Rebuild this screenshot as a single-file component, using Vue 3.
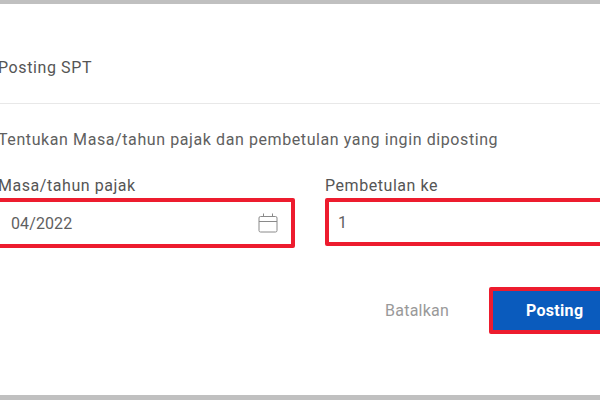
<script setup>
const fields = [
  { label: 'Masa/tahun pajak', value: '04/2022', date: true },
  { label: 'Pembetulan ke', value: '1', date: false },
]
</script>

<template>
  <div class="page">
    <div class="edge"></div>
    <main class="dialog">
      <header class="head"><h1>Posting SPT</h1></header>
      <section class="body">
        <p class="intro">Tentukan Masa/tahun pajak dan pembetulan yang ingin diposting</p>
        <div class="fields">
          <div v-for="f in fields" :key="f.label" class="field" :class="{ second: !f.date }">
            <label>{{ f.label }}</label>
            <div class="mark">
              <div class="input">
                <span>{{ f.value }}</span>
                <svg v-if="f.date" width="20" height="20" viewBox="0 0 20 20" fill="none" stroke="#8a8a8a" stroke-width="1">
                  <rect x="1" y="3.5" width="18" height="15.5" rx="1.5" />
                  <path d="M1 8.5h18M5.5 0.5v3M14.5 0.5v3" />
                </svg>
              </div>
            </div>
          </div>
        </div>
        <div class="actions">
          <button class="cancel" type="button">Batalkan</button>
          <div class="mark btn-mark"><button class="primary" type="button">Posting</button></div>
        </div>
      </section>
    </main>
    <div class="edge"></div>
  </div>
</template>

<style scoped>
.page {
  width: 600px;
  height: 400px;
  overflow: hidden;
  display: flex;
  flex-direction: column;
  background: #fff;
  font-family: Roboto, "Liberation Sans", sans-serif;
  color: #5c5c5c;
}
.edge {
  height: 4px;
  flex: none;
  background: #c0c0c0;
}
.edge:last-child { height: 5px; }
.dialog {
  flex: 1;
  display: flex;
  flex-direction: column;
  min-height: 0;
}
.head {
  height: 100px;
  flex: none;
  box-sizing: border-box;
  padding: 53px 0 0 0;
  margin-left: -2px;
  border-bottom: 1px solid #e8e8e8;
}
h1 {
  margin: 0;
  font-size: 16px;
  line-height: 22px;
  font-weight: 400;
  letter-spacing: 0.6px;
  color: #555;
}
.body {
  padding-top: 25px;
  margin-left: -2px;
}
.intro {
  margin: 0;
  font-size: 16px;
  line-height: 22px;
  letter-spacing: 0.59px;
  color: #606060;
}
.fields {
  display: flex;
  align-items: flex-start;
  margin-top: 25px;
}
.field { width: 297px; flex: none; }
.field.second { margin-left: 30px; width: 300px; }
label {
  display: block;
  font-size: 16px;
  line-height: 20px;
  letter-spacing: 0.55px;
  color: #555;
  margin-bottom: 2px;
}
.mark {
  border: 4px solid #ed1c2e;
  border-radius: 2px;
  background: #fff;
}
.field:first-child .mark { margin-left: -3px; }
.field:first-child .input { height: 42px; padding-left: 12px; }
.field.second .mark { margin: 1px -10px 0 0; }
.input {
  height: 40px;
  box-sizing: border-box;
  padding: 0 13px 0 9px;
  display: flex;
  align-items: center;
  justify-content: space-between;
  font-size: 16px;
  letter-spacing: 0.1px;
  color: #5f5f5f;
}
.actions {
  display: flex;
  align-items: center;
  margin-top: 39px;
  padding-left: 387px;
}
.cancel {
  width: 64px;
  padding: 0;
  border: 0;
  background: none;
  font: 400 16px Roboto, sans-serif;
  letter-spacing: 0.25px;
  color: #999;
  margin-right: 40px;
}
.btn-mark {
  width: 140px;
  flex: none;
}
.primary {
  display: block;
  width: 100%;
  height: 39px;
  border: 0;
  padding: 0;
  background: #0a5bbd;
  color: #fff;
  font: 700 16px Roboto, sans-serif;
  letter-spacing: 0.3px;
  text-align: left;
  text-indent: 33px;
}
</style>

<style>
html, body { margin: 0; overflow: hidden; }
</style>
